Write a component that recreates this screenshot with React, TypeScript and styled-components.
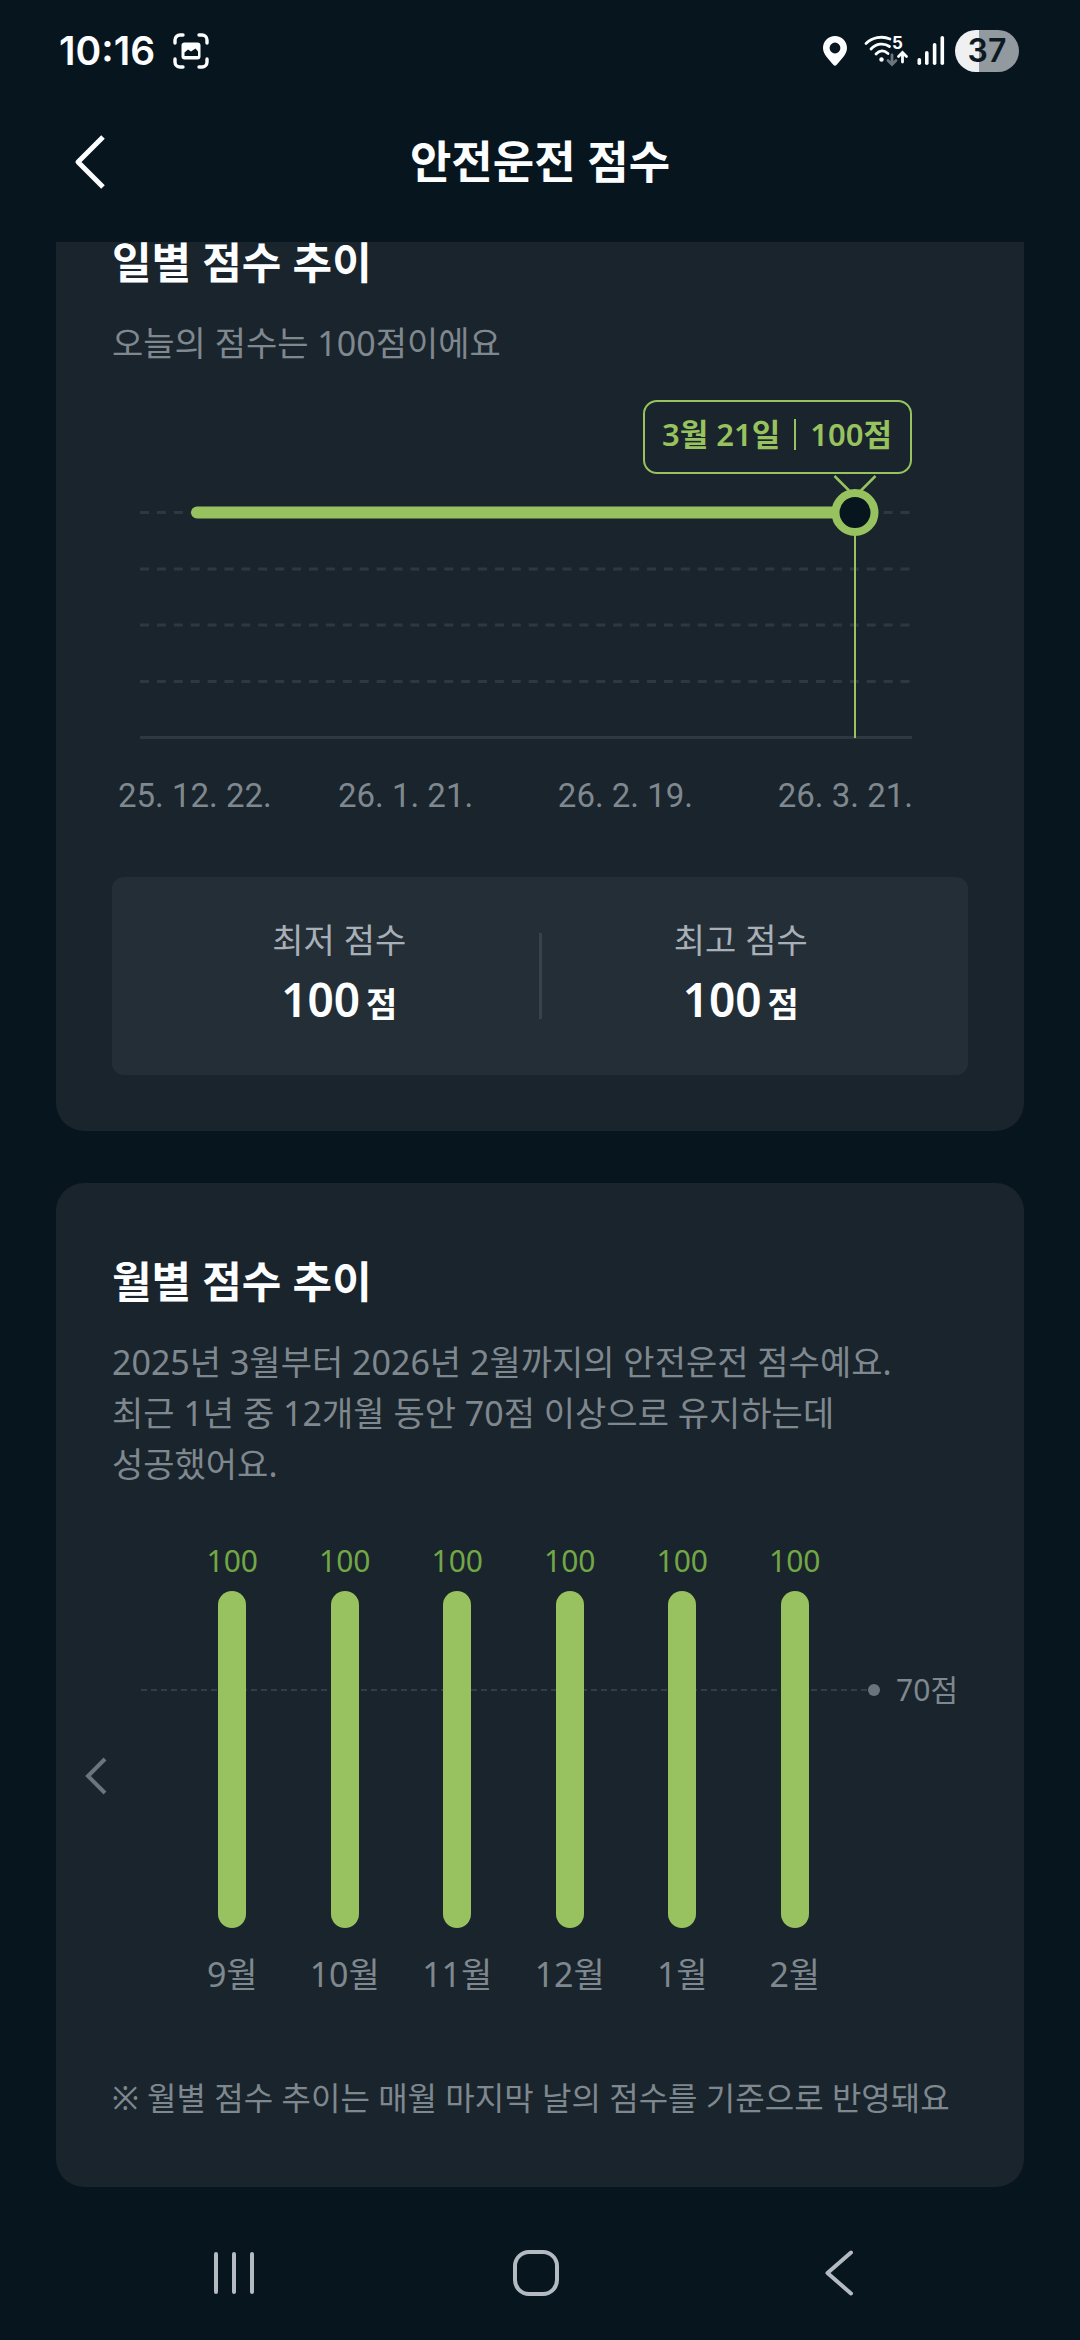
import React from "react";
import styled, { createGlobalStyle } from "styled-components";

const color = {
  page: "#07151e",
  card: "#1a242c",
  inset: "#242e36",
  line: "#2f3840",
  divider: "#39424a",
  green: "#97c25f",
  greenText: "#72a746",
  white: "#fdfeff",
  label: "#a8afb7",
  muted: "#7f888f",
  nav: "#b3bac1",
};

const GlobalStyle = createGlobalStyle`
  *, *::before, *::after { box-sizing: border-box; }
  html, body { margin: 0; background: ${color.page}; }
  body {
    font-family: "Noto Sans", "Noto Sans CJK KR", sans-serif;
    color: ${color.white};
  }
  h1, h2, p, dl, dd, dt { margin: 0; font-weight: 400; }
  svg { display: block; }
`;

const Screen = styled.div`
  display: flex;
  flex-direction: column;
  min-height: 100vh;
`;

const StatusBar = styled.div`
  display: flex;
  align-items: center;
  justify-content: space-between;
  height: 102px;
  padding: 0 61px 0 59px;
`;

const StatusGroup = styled.div<{ $gap: number }>`
  display: flex;
  align-items: center;
  gap: ${(p) => p.$gap}px;
`;

const Clock = styled.time`
  font-family: Inter, "Noto Sans", sans-serif;
  font-size: 39px;
  font-weight: 600;
  line-height: 48px;
`;

const Battery = styled.div<{ $level: number }>`
  display: grid;
  place-items: center;
  width: 64px;
  height: 42px;
  border-radius: 21px;
  background: linear-gradient(
    to right,
    #eef0f2 ${(p) => p.$level}%,
    #92999f ${(p) => p.$level}%
  );
  color: #0d1922;
  font-family: Inter, "Noto Sans", sans-serif;
  font-size: 32px;
  font-weight: 600;
  line-height: 42px;
`;

const Header = styled.header`
  display: grid;
  grid-template-columns: 120px 1fr 120px;
  align-items: center;
  height: 120px;
  margin-bottom: 20px;
  padding: 0 30px;
`;

const IconButton = styled.button`
  display: grid;
  place-items: center;
  height: 96px;
  padding: 0;
  border: 0;
  background: none;
  color: inherit;
  cursor: pointer;
`;

const PageTitle = styled.h1`
  font-size: 45px;
  font-weight: 600;
  line-height: 60px;
  text-align: center;
`;

const Content = styled.main`
  flex: 1;
  overflow: hidden;
  padding: 0 56px;
`;

/* The list sits slightly scrolled, so the first card runs under the header. */
const CardList = styled.div`
  display: flex;
  flex-direction: column;
  gap: 52px;
  margin-top: -78px;
`;

const Card = styled.section`
  padding: 78px 56px 56px;
  border-radius: 28px;
  background: ${color.card};
`;

const CardTitle = styled.h2`
  font-size: 43px;
  font-weight: 700;
  line-height: 42px;
`;

const Description = styled.p`
  margin-top: 34px;
  color: ${color.muted};
  font-size: 34px;
  line-height: 51px;
  word-break: keep-all;
`;

const DailyPlot = styled.div`
  position: relative;
  margin: 31px 56px 0 28px;

  > svg {
    width: 100%;
    height: auto;
    overflow: visible;
  }
`;

const Tooltip = styled.div`
  position: absolute;
  top: 0;
  right: 0;
  display: flex;
  align-items: center;
  gap: 14px;
  height: 74px;
  padding: 0 18px 6px 17px;
  border: 2px solid ${color.green};
  border-radius: 14px;
  background: ${color.card};
  color: ${color.green};
  font-size: 31px;
  font-weight: 600;
  line-height: 40px;
  white-space: nowrap;
`;

const TooltipRule = styled.span`
  width: 2px;
  height: 31px;
  background: ${color.green};
`;

const DateAxis = styled.div`
  display: grid;
  grid-template-columns: 1fr 1fr 1fr auto;
  margin: 35px 55px 0 6px;
  color: ${color.muted};
  font-family: Roboto, "Noto Sans", sans-serif;
  font-size: 33px;
  line-height: 42px;
  white-space: nowrap;
`;

const Stats = styled.dl`
  display: grid;
  grid-template-columns: 1fr 3px 1fr;
  align-items: center;
  margin-top: 60px;
  padding: 39px 28px 48px;
  border-radius: 12px;
  background: ${color.inset};
`;

const Stat = styled.div`
  display: flex;
  flex-direction: column;
  align-items: center;
  gap: 7px;
`;

const StatRule = styled.div`
  height: 86px;
  margin-top: 8px;
  background: ${color.divider};
`;

const StatLabel = styled.dt`
  color: ${color.label};
  font-size: 34px;
  line-height: 48px;
`;

const StatValue = styled.dd`
  display: flex;
  align-items: baseline;
  gap: 6px;
  font-size: 46px;
  font-weight: 600;
  line-height: 56px;
`;

const Unit = styled.span`
  font-size: 34px;
  line-height: 34px;
`;

const MonthlyChart = styled.div`
  display: flex;
  align-items: center;
  margin: 53px 0 0 -40px;
`;

const PagerButton = styled(IconButton)`
  width: 48px;
  margin-top: 14px;
  color: #6c757e;
`;

const MonthlyPlot = styled.div`
  position: relative;
  flex: 1;
`;

const BAR_HEIGHT = 337;

const GoalLine = styled.div<{ $score: number }>`
  position: absolute;
  left: 21px;
  right: 0;
  bottom: ${(p) => 67 + Math.round((BAR_HEIGHT * p.$score) / 100)}px;
  display: flex;
  align-items: center;
  height: 36px;
  margin-bottom: -16px;
  padding-right: 10px;
  color: ${color.muted};
  font-size: 30px;
  line-height: 36px;
`;

const GoalDashes = styled.span`
  flex: 1;
  height: 2px;
  background: repeating-linear-gradient(
    to right,
    #343d45 0 6px,
    transparent 6px 10px
  );
`;

const GoalDot = styled.span`
  width: 12px;
  height: 12px;
  margin-right: 16px;
  border-radius: 50%;
  background: #6b747d;
`;

const Bars = styled.div`
  position: relative;
  display: grid;
  grid-template-columns: repeat(6, 1fr);
  margin: 0 117px 0 56px;
`;

const BarColumn = styled.div`
  display: flex;
  flex-direction: column;
  align-items: center;
`;

const BarValue = styled.span`
  margin-bottom: 12px;
  color: ${color.greenText};
  font-size: 30px;
  line-height: 36px;
`;

const BarTrack = styled.div`
  display: flex;
  align-items: flex-end;
  height: ${BAR_HEIGHT}px;
`;

const Bar = styled.div`
  width: 28px;
  border-radius: 14px;
  background: ${color.green};
`;

const BarMonth = styled.span`
  margin-top: 25px;
  color: ${color.muted};
  font-size: 34px;
  line-height: 42px;
`;

const Footnote = styled.p`
  margin-top: 79px;
  padding-bottom: 9px;
  color: ${color.muted};
  font-size: 32px;
  line-height: 48px;
`;

const NavBar = styled.nav`
  display: grid;
  grid-template-columns: repeat(3, 1fr);
  align-items: center;
  height: 134px;
  padding: 0 90px 0 83px;
  color: ${color.nav};
`;

const CaptureIcon = () => (
  <svg width="36" height="36" viewBox="0 0 36 36" fill="none" aria-hidden="true">
    <path
      d="M2 10V7a5 5 0 0 1 5-5h3M26 2h3a5 5 0 0 1 5 5v3M34 26v3a5 5 0 0 1-5 5h-3M10 34H7a5 5 0 0 1-5-5v-3"
      stroke="#fdfeff"
      strokeWidth="3.4"
      strokeLinecap="round"
    />
    <rect x="8.5" y="9.5" width="19" height="17" rx="3" fill="#fdfeff" />
    <path d="M11.5 23v-3.5l3.5-3 3 2 4.500-3 2.500 3V23z" fill={color.page} />
  </svg>
);

const PinIcon = () => (
  <svg width="26" height="32" viewBox="0 0 26 32" aria-hidden="true">
    <path
      fillRule="evenodd"
      fill="#fdfeff"
      d="M13 1C6.200 1 1 6.200 1 13c0 6.500 6.500 12 10.300 16.800a2.200 2.200 0 0 0 3.400 0C18.500 25 25 19.500 25 13 25 6.200 19.800 1 13 1zm0 6.600a5.400 5.400 0 1 1 0 10.800 5.400 5.400 0 0 1 0-10.800z"
    />
  </svg>
);

const WifiIcon = () => (
  <svg width="46" height="34" viewBox="0 0 46 34" fill="none" aria-hidden="true">
    <g stroke="#fdfeff" strokeWidth="2.800" strokeLinecap="round">
      <path d="M2 9.500C8 3.500 18 1.500 26 5" />
      <path d="M7 15c5-5.500 13-6.500 18.500-2.500" />
      <path d="M12 20c3.500-3.800 8-4 12-.5" />
      <path d="M38.500 28V19M34.500 22.500l4-4 4 4" />
    </g>
    <circle cx="17.500" cy="25.500" r="2.200" fill="#fdfeff" />
    <path
      d="M28 21v9M24 26.500l4 4 4-4"
      stroke="#6c757d"
      strokeWidth="2.800"
      strokeLinecap="round"
    />
    <text
      x="28"
      y="15"
      fill="#fdfeff"
      fontFamily="Inter, sans-serif"
      fontSize="17"
      fontWeight="700"
    >
      5
    </text>
  </svg>
);

const SignalIcon = () => (
  <svg width="28" height="30" viewBox="0 0 28 30" aria-hidden="true">
    <g fill="#fdfeff">
      <rect x="0.500" y="22" width="3.600" height="7" rx="1.800" />
      <rect x="8" y="15" width="3.600" height="14" rx="1.800" />
      <rect x="15.800" y="7" width="3.600" height="22" rx="1.800" />
      <rect x="23.500" y="0" width="3.600" height="29" rx="1.800" />
    </g>
  </svg>
);

const HeaderBackIcon = () => (
  <svg width="32" height="54" viewBox="0 0 32 54" fill="none" aria-hidden="true">
    <path d="M29 2 4 27l25 25" stroke="#fdfeff" strokeWidth="5" strokeLinejoin="round" />
  </svg>
);

const PreviousIcon = () => (
  <svg width="22" height="38" viewBox="0 0 22 38" fill="none" aria-hidden="true">
    <path d="M20 2 3 19l17 17" stroke="currentColor" strokeWidth="4" />
  </svg>
);

const RecentsIcon = () => (
  <svg width="40" height="44" viewBox="0 0 40 44" aria-hidden="true">
    <path
      d="M2 3v38M20 3v38M38 3v38"
      stroke="currentColor"
      strokeWidth="4"
      strokeLinecap="round"
    />
  </svg>
);

const HomeIcon = () => (
  <svg width="46" height="46" viewBox="0 0 46 46" fill="none" aria-hidden="true">
    <rect x="2" y="2" width="42" height="42" rx="14" stroke="currentColor" strokeWidth="4" />
  </svg>
);

const NavBackIcon = () => (
  <svg width="30" height="46" viewBox="0 0 30 46" fill="none" aria-hidden="true">
    <path
      d="M27 2.500 3.500 23 27 43.500"
      stroke="currentColor"
      strokeWidth="4"
      strokeLinecap="round"
      strokeLinejoin="round"
    />
  </svg>
);

const DailyLines = () => (
  <svg viewBox="0 0 772 340" role="img" aria-label="일별 점수 그래프">
    {[112.5, 169, 225, 281.5].map((y) => (
      <line
        key={y}
        x1="0"
        x2="772"
        y1={y}
        y2={y}
        stroke={color.line}
        strokeWidth="3"
        strokeDasharray="9 7.900"
      />
    ))}
    <line x1="0" x2="772" y1="337.500" y2="337.500" stroke={color.line} strokeWidth="3" />
    <line x1="715" x2="715" y1="112" y2="338" stroke={color.green} strokeWidth="2" />
    <line
      x1="57"
      x2="700"
      y1="112.500"
      y2="112.500"
      stroke={color.green}
      strokeWidth="12"
      strokeLinecap="round"
    />
    <path d="M694.500 76l17 17M735.500 76l-17 17" stroke={color.green} strokeWidth="2.500" />
    <circle
      cx="715"
      cy="112.500"
      r="19.500"
      fill={color.page}
      stroke={color.green}
      strokeWidth="8"
    />
  </svg>
);

const dates = ["25. 12. 22.", "26. 1. 21.", "26. 2. 19.", "26. 3. 21."];

const months = [
  { month: "9월", score: 100 },
  { month: "10월", score: 100 },
  { month: "11월", score: 100 },
  { month: "12월", score: 100 },
  { month: "1월", score: 100 },
  { month: "2월", score: 100 },
];

export default function App() {
  return (
    <Screen>
      <GlobalStyle />
      <StatusBar>
        <StatusGroup $gap={18}>
          <Clock>10:16</Clock>
          <CaptureIcon />
        </StatusGroup>
        <StatusGroup $gap={10}>
          <StatusGroup $gap={7}>
            <StatusGroup $gap={16}>
              <PinIcon />
              <WifiIcon />
            </StatusGroup>
            <SignalIcon />
          </StatusGroup>
          <Battery $level={37}>37</Battery>
        </StatusGroup>
      </StatusBar>

      <Header>
        <IconButton type="button" aria-label="뒤로">
          <HeaderBackIcon />
        </IconButton>
        <PageTitle>안전운전 점수</PageTitle>
      </Header>

      <Content>
        <CardList>
          <Card>
            <CardTitle>일별 점수 추이</CardTitle>
            <Description>오늘의 점수는 100점이에요</Description>
            <DailyPlot>
              <DailyLines />
              <Tooltip>
                <span>3월 21일</span>
                <TooltipRule />
                <span>100점</span>
              </Tooltip>
            </DailyPlot>
            <DateAxis>
              {dates.map((d) => (
                <span key={d}>{d}</span>
              ))}
            </DateAxis>
            <Stats>
              <Stat>
                <StatLabel>최저 점수</StatLabel>
                <StatValue>
                  100<Unit>점</Unit>
                </StatValue>
              </Stat>
              <StatRule />
              <Stat>
                <StatLabel>최고 점수</StatLabel>
                <StatValue>
                  100<Unit>점</Unit>
                </StatValue>
              </Stat>
            </Stats>
          </Card>

          <Card>
            <CardTitle>월별 점수 추이</CardTitle>
            <Description>
              2025년 3월부터 2026년 2월까지의 안전운전 점수예요.
              <br />
              최근 1년 중 12개월 동안 70점 이상으로 유지하는데
              <br />
              성공했어요.
            </Description>
            <MonthlyChart>
              <PagerButton type="button" aria-label="이전 6개월">
                <PreviousIcon />
              </PagerButton>
              <MonthlyPlot>
                <GoalLine $score={70}>
                  <GoalDashes />
                  <GoalDot />
                  <span>70점</span>
                </GoalLine>
                <Bars>
                  {months.map(({ month, score }) => (
                    <BarColumn key={month}>
                      <BarValue>{score}</BarValue>
                      <BarTrack>
                        <Bar style={{ height: `${score}%` }} />
                      </BarTrack>
                      <BarMonth>{month}</BarMonth>
                    </BarColumn>
                  ))}
                </Bars>
              </MonthlyPlot>
            </MonthlyChart>
            <Footnote>※ 월별 점수 추이는 매월 마지막 날의 점수를 기준으로 반영돼요</Footnote>
          </Card>
        </CardList>
      </Content>

      <NavBar>
        <IconButton type="button" aria-label="최근 앱">
          <RecentsIcon />
        </IconButton>
        <IconButton type="button" aria-label="홈">
          <HomeIcon />
        </IconButton>
        <IconButton type="button" aria-label="이전">
          <NavBackIcon />
        </IconButton>
      </NavBar>
    </Screen>
  );
}
